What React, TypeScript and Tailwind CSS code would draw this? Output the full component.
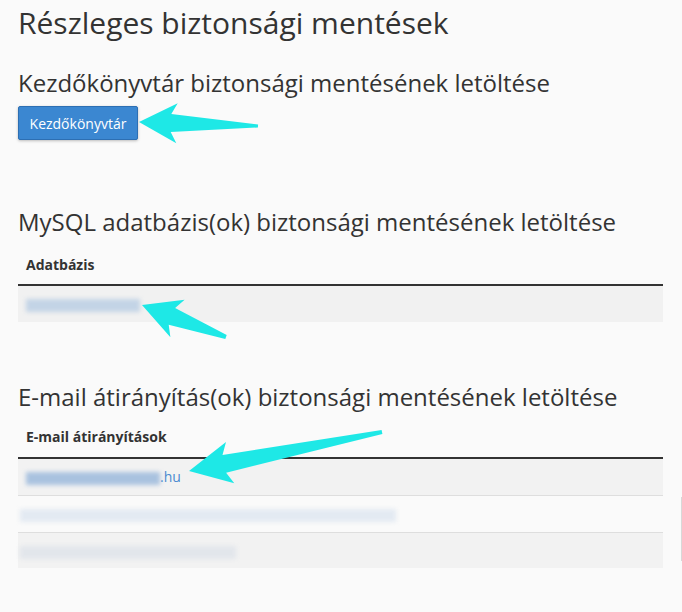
import React from 'react';

type Pt = [number, number];

// Tapered callout arrow: wide head at the tip, shaft narrowing to the tail
const arrowPoints = (tip: Pt, tail: Pt, headLen = 38, headHalf = 20, neckHalf = 9, tailHalf = 1.5) => {
  const dx = tail[0] - tip[0];
  const dy = tail[1] - tip[1];
  const len = Math.hypot(dx, dy);
  const ux = dx / len;
  const uy = dy / len;
  const nx = -uy;
  const ny = ux;
  const at = (d: number, w: number): string =>
    `${(tip[0] + ux * d + nx * w).toFixed(1)},${(tip[1] + uy * d + ny * w).toFixed(1)}`;
  return [
    at(0, 0),
    at(headLen, headHalf),
    at(headLen - 6, neckHalf),
    at(len, tailHalf),
    at(len, -tailHalf),
    at(headLen - 6, -neckHalf),
    at(headLen, -headHalf),
  ].join(' ');
};

const Arrows: React.FC = () => (
  <svg className="absolute inset-0 pointer-events-none" width="682" height="612">
    <polygon points={arrowPoints([139, 122], [258, 126])} fill="#1ee8e6" />
    <polygon points={arrowPoints([142, 305], [226, 337], 38, 20, 9, 2)} fill="#1ee8e6" />
    <polygon points={arrowPoints([189, 471], [382, 432], 42, 21, 9, 2)} fill="#1ee8e6" />
  </svg>
);

// Hidden (blurred) part of a link value
const Smudge: React.FC<{ w: number; tone?: string }> = ({ w, tone = 'bg-[#b8cde4]' }) => (
  <span className={`inline-block h-[13px] align-middle blur-[2px] ${tone}`} style={{ width: w }} />
);

const App: React.FC = () => {
  return (
    <div className="relative min-h-[612px] w-[682px] bg-[#fafafa] text-[#333] font-['Open_Sans',sans-serif] overflow-hidden">
      <div className="pl-[18px] pr-[19px] pt-[3px]">
        {/* Page title */}
        <h1 className="text-[30px] leading-[40px] text-[#333]">Részleges biztonsági mentések</h1>

        {/* Home directory */}
        <h2 className="mt-[24px] text-[24px] leading-[32px]">Kezdőkönyvtár biztonsági mentésének letöltése</h2>
        <button className="mt-[7px] h-[34px] w-[120px] rounded-[2px] bg-[#3b87d1] border border-[#2d6fb3] text-white text-[14px] shadow-[0_1px_3px_rgba(0,0,0,0.25)]">
          Kezdőkönyvtár
        </button>

        {/* MySQL databases */}
        <h2 className="mt-[66px] text-[24px] leading-[32px]">MySQL adatbázis(ok) biztonsági mentésének letöltése</h2>
        <table className="mt-[9px] w-full border-collapse text-[14px]">
          <thead>
            <tr className="border-b-2 border-[#333]">
              <th className="text-left font-bold px-[8px] pt-[8px] pb-[9px] leading-[20px]">Adatbázis</th>
            </tr>
          </thead>
          <tbody>
            <tr className="bg-[#f1f1f1]">
              <td className="px-[8px] h-[37px] text-[#428bca]">
                <Smudge w={114} tone="bg-[#c3d4e6]" />
              </td>
            </tr>
          </tbody>
        </table>

        {/* Email forwarders */}
        <h2 className="mt-[59px] text-[24px] leading-[32px]">E-mail átirányítás(ok) biztonsági mentésének letöltése</h2>
        <table className="mt-[6px] w-full border-collapse text-[14px]">
          <thead>
            <tr className="border-b-2 border-[#333]">
              <th className="text-left font-bold px-[8px] pt-[8px] pb-[10px] leading-[20px]">E-mail átirányítások</th>
            </tr>
          </thead>
          <tbody>
            <tr className="bg-[#f2f2f2] border-b border-[#dedede]">
              <td className="px-[8px] h-[37px] text-[#4a8ad0] leading-[20px]">
                <Smudge w={134} tone="bg-[#a9c2df]" />
                <span>.hu</span>
              </td>
            </tr>
            <tr className="bg-[#fafafa] border-b border-[#dedede]">
              <td className="px-[2px] h-[37px]">
                <Smudge w={376} tone="bg-[#e3eaf2]" />
              </td>
            </tr>
            <tr className="bg-[#f2f2f2]">
              <td className="px-[2px] h-[36px]">
                <Smudge w={216} tone="bg-[#e2e6eb]" />
              </td>
            </tr>
          </tbody>
        </table>
      </div>
      <Arrows />
      {/* edge of a neighbouring panel */}
      <div className="absolute right-0 top-[497px] h-[64px] w-px bg-[#d8d8d8]" />
    </div>
  );
};

export default App;
